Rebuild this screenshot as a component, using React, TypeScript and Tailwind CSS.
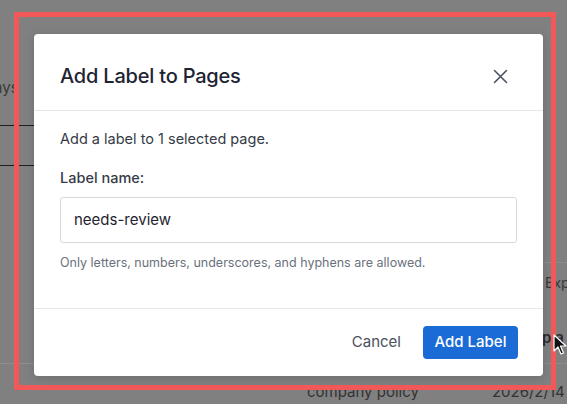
import React from "react";

export default function App() {
  const font = { fontFamily: "Inter, 'Liberation Sans', sans-serif" };
  return (
    <div
      className="relative w-[567px] h-[404px] overflow-hidden bg-[#808080]"
      style={font}
    >
      {/* dimmed page underneath */}
      <div className="absolute inset-0 flex flex-col text-[15px] text-[#333]">
        <div className="h-[78px]" />
        <div className="h-[49px] border-b border-[#1e1e1e] w-[60px]">
          <span className="ml-[-6px] text-[#3a3a3a]">ays</span>
        </div>
        <div className="h-[40px] border-b border-[#1e1e1e] w-[60px]" />
        <div className="h-[98px] border-b border-[#8c8c8c] ml-[520px]" />
        <div className="h-[58px] pl-[545px] pt-[9px] text-[14px] text-[#3a3a3a]">Exp</div>
        <div className="h-[44px] pl-[542px] pt-[6px] text-[15px] font-semibold text-[#2a2a2a] border-b border-[#8e8e8e]">pla</div>
        <div className="flex pt-[17px] pl-[307px] gap-[73px]">
          <span>company policy</span>
          <span>2026/2/14</span>
        </div>
      </div>

      {/* highlight frame */}
      <div className="absolute left-[14px] top-[12px] w-[542px] h-[378px] border-[5px] border-[#f25858]" />

      {/* modal */}
      <div className="absolute inset-0 pl-[34px] pt-[34px]">
        <div className="w-[509px] h-[342px] bg-white rounded-[4px] flex flex-col shadow-[0_2px_10px_rgba(0,0,0,0.15)]">
          <div className="h-[77px] shrink-0 border-b border-[#e6e7ea] flex items-center justify-between pl-[26px] pr-[35px] pt-[8px]">
            <h2 className="text-[20px] font-medium text-[#1e2433] tracking-[-0.2px]">Add Label to Pages</h2>
            <svg width="15" height="15" viewBox="0 0 15 15" fill="none" stroke="#4b5161" strokeWidth="1.6" strokeLinecap="round">
              <path d="M1.5 1.5 L13.5 13.5 M13.5 1.5 L1.5 13.5" />
            </svg>
          </div>
          <div className="flex-1 flex flex-col px-[26px] pt-[19px]">
            <p className="text-[14.5px] text-[#353b47] leading-[18px]">Add a label to 1 selected page.</p>
            <label className="mt-[21px] text-[14.5px] font-medium text-[#353b47] leading-[18px]">Label name:</label>
            <div className="mt-[10px] h-[46px] border border-[#d8d9dc] rounded-[3px] flex items-center pl-[13px] text-[15px] text-[#1f2430]">
              needs-review
            </div>
            <p className="mt-[12px] text-[12.5px] text-[#6b717c] leading-[15px]">
              Only letters, numbers, underscores, and hyphens are allowed.
            </p>
          </div>
          <div className="h-[68px] shrink-0 border-t border-[#e6e7ea] flex items-center justify-end gap-[22px] pr-[25px]">
            <span className="text-[15px] text-[#4a505c]">Cancel</span>
            <button className="h-[33px] w-[95px] rounded-[4px] bg-[#1b6bd6] text-white text-[15px] font-medium">
              Add Label
            </button>
          </div>
        </div>
      </div>

      {/* mouse cursor */}
      <svg className="absolute left-[553px] top-[334px]" width="14" height="22" viewBox="0 0 14 22">
        <path d="M1 1 L1 17 L5 13 L8 20 L10.5 19 L7.5 12 L13 12 Z" fill="#111" stroke="#fff" strokeWidth="1.2" strokeLinejoin="round" />
      </svg>
    </div>
  );
}
